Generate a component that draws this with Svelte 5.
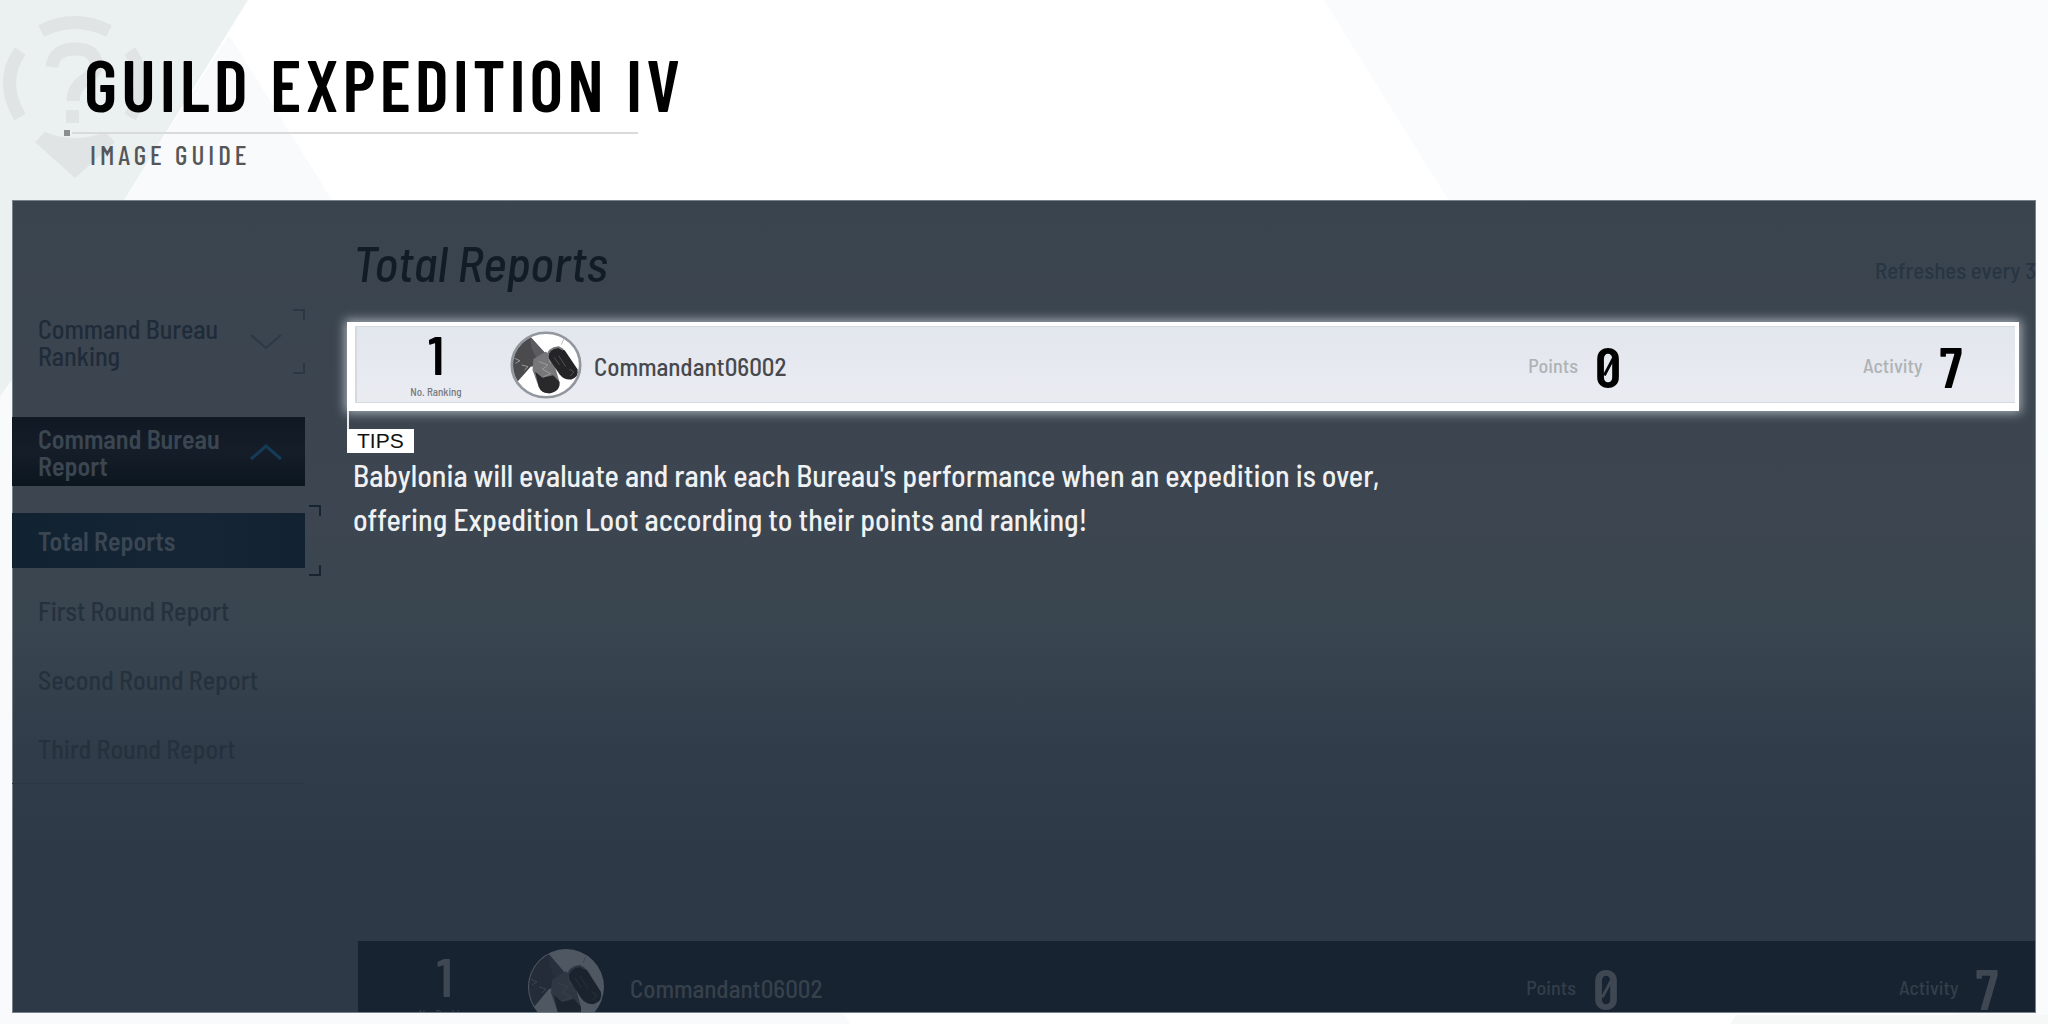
<script>
  const rounds = ['First Round Report', 'Second Round Report', 'Third Round Report'];
  const commander = { rank: 1, name: 'Commandant06002', points: 0, activity: 7 };
</script>

{#snippet avatar()}
  <svg class="avatar" viewBox="0 0 80 80" preserveAspectRatio="none" aria-hidden="true">
    <defs>
      <clipPath id="disc"><circle cx="40" cy="40" r="37" /></clipPath>
    </defs>
    <circle class="disc" cx="40" cy="40" r="38" />
    <g clip-path="url(#disc)">
      <path d="M0 8 22 6 39 26 33 40 23 42 8 60 0 52z" fill="#4b4b4e" />
      <path d="M22 7 39 26 33 40 24 20z" fill="#5c5c60" />
      <path d="M5 32l6 3-5 3M13 40l7 2-4 4" fill="none" stroke="#a5a5a8" stroke-width="1" />
      <path d="M26 33 40 24 48 35 55 60Q56 70 46 73 36 75 32 66L25 46z" fill="#77777a" />
      <path d="M28 48 36 55 48 52 55 60Q56 70 46 73 36 75 32 66z" fill="#29292c" />
      <path d="M32 36l10 4-6 5 9 5-8 4M42 30l3 8" fill="none" stroke="#a0a0a3" stroke-width="1" />
      <path d="M43 27Q45 19 54 19L61 23 75 45Q77 54 68 57 60 58 55 51L43 32z" fill="#242427" />
      <path d="M41 32Q42 20 54 19L59 22" fill="none" stroke="#77777b" stroke-width="2" />
      <path d="M57 16 60 9" fill="none" stroke="#b5b5b8" stroke-width="1" />
      <path d="M49 31l6 9M54 29l8 13M66 45l5 3-4 5" fill="none" stroke="#58585c" stroke-width="1" />
    </g>
    <circle class="rim" cx="40" cy="40" r="38" />
  </svg>
{/snippet}

{#snippet entry(extra)}
  <article class="entry {extra}">
    <div class="rank">
      <strong>{commander.rank}</strong>
      <small>No. Ranking</small>
    </div>
    {@render avatar()}
    <span class="name">{commander.name}</span>
    <div class="stat points">
      <span>Points</span><strong class="slashed">{commander.points}</strong>
    </div>
    <div class="stat activity">
      <span>Activity</span><strong>{commander.activity}</strong>
    </div>
  </article>
{/snippet}

<div class="page">
  <svg class="facets" aria-hidden="true">
    <rect width="100%" height="100%" fill="#fff" />
    <path d="M0 395 124 200 229 35 332 200 850 1024H0z" fill="#f9fafc" />
    <path d="M0 0H248L124 200 12 380 0 396z" fill="#ebf0f0" />
    <path d="M1324 0H4000V1024H1960z" fill="#fafbfc" />
    <path d="M1736 1015H4000V1024H1730z" fill="#f6f8f8" />
  </svg>

  <header>
    <svg class="emblem" viewBox="0 0 150 182" aria-hidden="true">
      <g fill="none" stroke="#e0e4e4" stroke-width="13">
        <path d="M41 31Q75 14 109 31" />
        <path d="M20 51Q-1 82 20 117" />
        <path d="M130 51Q151 82 130 117" />
        <path d="M52 67Q54 49 75 49 96 49 96 65 96 73 85 80 73 88 73 101" />
      </g>
      <path d="M66 110H79V123H66zM45 132Q75 144 105 132L115 142 75 178 35 142z" fill="#e0e4e4" />
    </svg>
    <h1>GUILD EXPEDITION IV</h1>
    <div class="rule"></div>
    <p>IMAGE GUIDE</p>
  </header>

  <main>
    <nav>
      <button class="group ranking">
        <span>Command Bureau<br />Ranking</span>
        <svg viewBox="0 0 32 18" aria-hidden="true"><path d="M1 2 16 15 31 2" /></svg>
      </button>
      <button class="group report">
        <span>Command Bureau<br />Report</span>
        <svg viewBox="0 0 32 18" aria-hidden="true"><path d="M1 16 16 3 31 16" /></svg>
      </button>
      <button class="total">Total Reports</button>
      <div class="rounds">
        {#each rounds as round}
          <button>{round}</button>
        {/each}
      </div>
    </nav>

    <section>
      <div class="heading">
        <h2>Total Reports</h2>
        <span>Refreshes every 3</span>
      </div>
      <div class="spotlight">{@render entry('')}</div>
      <div class="tips">
        <span class="tag">TIPS</span>
        <p>
          Babylonia will evaluate and rank each Bureau's performance when an expedition is over,<br />
          offering Expedition Loot according to their points and ranking!
        </p>
      </div>
      {@render entry('own')}
    </section>
  </main>
</div>

<style>
  :global(body) {
    margin: 0;
  }
  .page {
    position: relative;
    display: flex;
    flex-direction: column;
    box-sizing: border-box;
    min-height: 100vh;
    padding: 0 12px 11px;
    overflow: hidden;
    font-family: 'Barlow Condensed', 'Roboto Condensed', 'Liberation Sans Narrow', 'Liberation Sans', sans-serif;
    font-weight: 500;
  }
  .facets {
    position: absolute;
    inset: 0;
    width: 100%;
    height: 100%;
  }
  h1, h2, p {
    margin: 0;
    font-weight: 500;
  }
  strong {
    font-weight: 600;
  }
  header {
    position: relative;
    box-sizing: border-box;
    height: 200px;
    padding: 47px 0 0 52px;
  }
  .emblem {
    position: absolute;
    top: 0;
    left: -12px;
    width: 150px;
  }
  h1 {
    position: relative;
    padding-left: 20px;
    color: #000;
    font-size: 72px;
    font-weight: 600;
    line-height: 72px;
    letter-spacing: 4px;
    white-space: nowrap;
  }
  .rule {
    position: relative;
    width: 574px;
    height: 2px;
    margin: 13px 0 6px;
    background: linear-gradient(90deg, transparent 8px, #d9dbdb 8px);
  }
  .rule::before {
    position: absolute;
    top: -2px;
    left: 0;
    width: 6px;
    height: 6px;
    background: #8c8e8e;
    content: '';
  }
  header p {
    position: relative;
    padding-left: 26px;
    color: #555658;
    font-size: 27px;
    line-height: 28px;
    letter-spacing: 4px;
  }
  main {
    position: relative;
    display: flex;
    flex: 1;
    overflow: hidden;
    background: linear-gradient(#3a444f 0%, #3c4550 40%, #39454f 52%, #303c4a 68%, #2d3947 82%, #2e3947 100%);
    font-family: 'Barlow Semi Condensed', 'Barlow Condensed', 'Liberation Sans Narrow', sans-serif;
    box-shadow: inset 0 0 0 1px #77818a;
  }
  nav {
    display: flex;
    flex: none;
    flex-direction: column;
    width: 293px;
    padding-top: 109px;
  }
  button {
    padding: 0 0 0 26px;
    border: 0;
    background: none;
    color: #25313d;
    font: inherit;
    font-size: 26px;
    text-align: left;
    white-space: nowrap;
  }
  .group {
    display: flex;
    align-items: center;
    justify-content: space-between;
    padding-right: 23px;
    line-height: 27px;
  }
  .group svg {
    width: 32px;
    fill: none;
    stroke: #2b3945;
    stroke-width: 2;
  }
  .ranking, .total {
    position: relative;
  }
  .ranking {
    height: 65px;
    color: #1f2b38;
  }
  .ranking::before, .ranking::after, .total::before, .total::after {
    position: absolute;
    right: 0;
    width: 10px;
    height: 9px;
    border: solid #2b3843;
    border-width: 2px 2px 0 0;
    content: '';
  }
  .ranking::before {
    top: 0;
  }
  .ranking::after {
    bottom: 0;
    border-width: 0 2px 2px 0;
  }
  .report {
    height: 69px;
    margin-top: 43px;
    background: linear-gradient(#0f1823, #141d28 50%, #0c161f);
    color: #3b4651;
    font-weight: 600;
  }
  .report svg {
    stroke: #153b57;
    stroke-width: 3;
  }
  .total {
    height: 55px;
    margin-top: 27px;
    background: linear-gradient(90deg, #112231, #152536 60%, #132231);
    color: #3a4753;
    font-weight: 600;
  }
  .total::before, .total::after {
    right: -16px;
    border-color: #162531;
  }
  .total::before {
    top: -8px;
  }
  .total::after {
    bottom: -8px;
    border-width: 0 2px 2px 0;
  }
  .rounds {
    display: grid;
    grid-auto-rows: 69px;
    padding-top: 8px;
    border-bottom: 1px solid #2b3643;
  }
  section {
    display: flex;
    flex: 1;
    flex-direction: column;
    min-width: 0;
    padding-left: 42px;
  }
  .heading {
    display: flex;
    flex: none;
    align-items: flex-start;
    justify-content: space-between;
    height: 122px;
    padding-left: 6px;
    box-sizing: border-box;
  }
  h2 {
    padding-top: 34px;
    color: #121c27;
    font-size: 50px;
    font-style: italic;
    line-height: 56px;
  }
  .heading span {
    padding-top: 55px;
    color: #283542;
    font-size: 23px;
    line-height: 30px;
    white-space: nowrap;
  }
  .spotlight {
    margin-right: 17px;
    padding: 4px 4px 8px 8px;
    background: #fff;
    box-shadow: 0 0 10px 2px #a8b2b8;
  }
  .entry {
    display: flex;
    align-items: center;
    height: 77px;
    border: solid #d6dade;
    border-width: 1px 0 1px 2px;
    box-sizing: border-box;
    background: linear-gradient(#e2e6ed, #eaecf2);
  }
  .rank {
    display: flex;
    flex: none;
    flex-direction: column;
    gap: 4px;
    align-items: center;
    box-sizing: border-box;
    width: 153px;
    padding: 0 0 4px 5px;
  }
  .rank strong {
    color: #000;
    font-size: 54px;
    line-height: 54px;
  }
  .rank small {
    color: #77797e;
    font-size: 11px;
    line-height: 14px;
  }
  .avatar {
    flex: none;
    width: 72px;
    height: 68px;
    margin-right: 12px;
  }
  .disc {
    fill: #fff;
  }
  .rim {
    fill: none;
    stroke: #92979e;
    stroke-width: 3;
  }
  .name {
    padding-top: 2px;
    color: #47494d;
    font-size: 25px;
    line-height: 30px;
  }
  .stat {
    display: flex;
    align-items: center;
    gap: 17px;
    color: #afb2b5;
    font-size: 20px;
  }
  .stat strong {
    position: relative;
    color: #000;
    font-family: 'Barlow Condensed', 'Liberation Sans Narrow', sans-serif;
    font-size: 58px;
    line-height: 60px;
  }
  .points {
    margin-left: auto;
  }
  .activity {
    width: 152px;
    margin-left: 242px;
  }
  .slashed::after {
    position: absolute;
    top: 30px;
    left: 4px;
    width: 20px;
    height: 3px;
    background: currentColor;
    transform: rotate(-62deg);
    content: '';
  }
  .tips {
    display: flex;
    flex-direction: column;
    align-items: flex-start;
    padding-top: 18px;
    background: linear-gradient(#e9ebed, #e9ebed) 0 0 / 2px 18px no-repeat;
  }
  .tag {
    padding: 0 10px;
    background: #fff;
    color: #111;
    font: 21px/24px 'Liberation Sans', sans-serif;
  }
  .tips p {
    padding-left: 6px;
    color: #f0f1f2;
    font-size: 30px;
    line-height: 44px;
    white-space: nowrap;
  }
  .own {
    height: 71px;
    margin: auto 1px 1px 11px;
    padding-top: 20px;
    border: 0;
    overflow: hidden;
    background: #172331;
  }
  .own .rank {
    width: 168px;
  }
  .own .rank strong, .own .stat strong {
    color: #3f4752;
  }
  .own .rank small, .own .stat {
    color: #333f4a;
  }
  .own .avatar {
    width: 80px;
    height: 80px;
    margin-right: 24px;
    opacity: 0.24;
  }
  .own .rim {
    stroke: none;
  }
  .own .name {
    color: #37414b;
  }
  .own .activity {
    width: 136px;
    margin-left: 280px;
  }
</style>
